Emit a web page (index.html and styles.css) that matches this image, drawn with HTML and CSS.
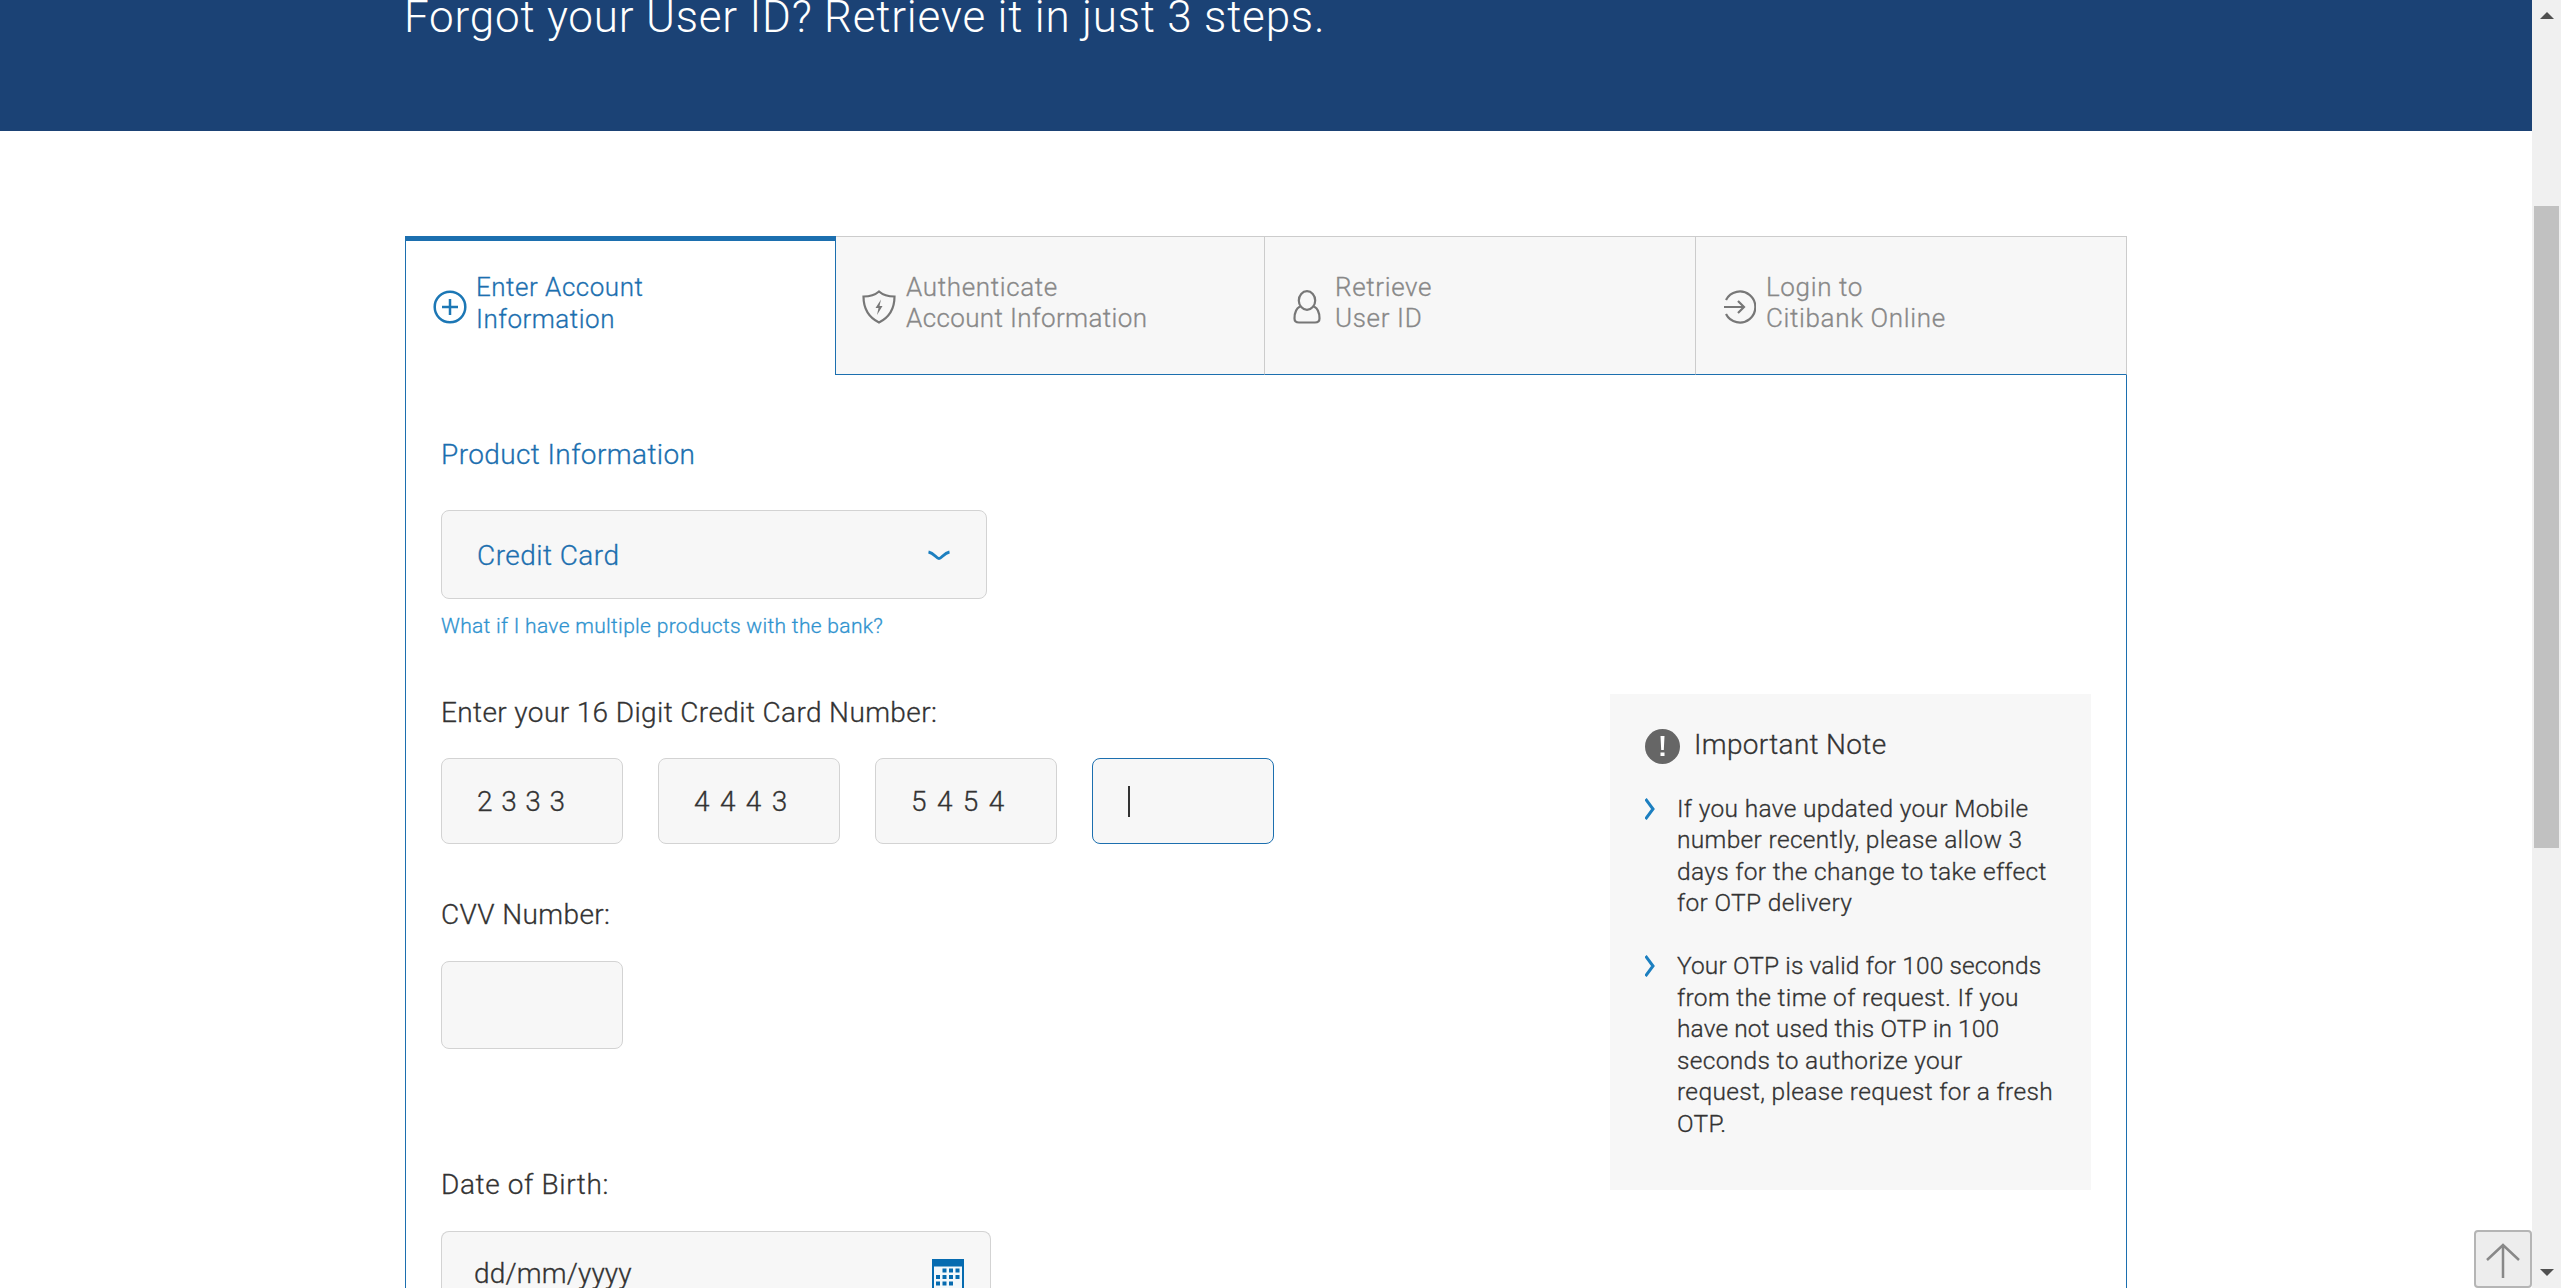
FILE: index.html
```html
<!DOCTYPE html>
<html lang="en">
<head>
<meta charset="utf-8">
<title>Forgot User ID</title>
<link rel="stylesheet" href="styles.css">
</head>
<body>
<div class="page">
  <header class="banner"><h1 class="banner-title">Forgot your User ID? Retrieve it in just 3 steps.</h1></header>
  <main class="content">
    <nav class="tabs">
      <div class="tab tab-active">
        <svg class="tab-icon" width="34" height="34" viewBox="0 0 34 34"><circle cx="17" cy="17" r="15.3"/><path d="M17 9v16M9 17h16"/></svg>
        <p class="tab-text"><span>Enter Account</span><span>Information</span></p>
      </div>
      <div class="tab">
        <svg class="tab-icon" width="34" height="34" viewBox="0 0 34 34"><path d="M17 1.500C12.500 5.500 7 6.500 1.500 6.500C1.500 18 6 27 17 32.500C28 27 32.500 18 32.500 6.500C27 6.500 21.500 5.500 17 1.500Z"/><path class="solid" d="M19 9.500L13.500 18h3l-1.500 7l5.500-9h-3z"/></svg>
        <p class="tab-text"><span>Authenticate</span><span class="line-tight">Account Information</span></p>
      </div>
      <div class="tab">
        <svg class="tab-icon" width="34" height="34" viewBox="0 0 34 34"><ellipse cx="16" cy="10.500" rx="8.200" ry="9.300"/><path d="M9 16.500C5 18.500 3.500 22 3.500 28.500C3.500 31.500 5 32.500 8 32.500H24C27 32.500 28.500 31.500 28.500 28.500C28.500 22 27 18.500 23 16.500"/></svg>
        <p class="tab-text"><span>Retrieve</span><span>User ID</span></p>
      </div>
      <div class="tab">
        <svg class="tab-icon" width="34" height="34" viewBox="0 0 34 34"><path d="M4 10A15.500 15.500 0 1 1 4 24M2 17h19.500M16 11l6 6l-6 6"/></svg>
        <p class="tab-text"><span>Login to</span><span>Citibank Online</span></p>
      </div>
    </nav>
    <section class="panel">
      <form class="form">
        <h2 class="section-title">Product Information</h2>
        <div class="select"><span>Credit Card</span>
          <svg class="chevron" width="24" height="11" viewBox="0 0 24 11"><path d="M1.500 2C7 3 9.500 8.500 12 8.500S17 3 22.500 2"/></svg>
        </div>
        <a class="help">What if I have multiple products with the bank?</a>
        <p class="label label-card">Enter your 16 Digit Credit Card Number:</p>
        <div class="digits">
          <div class="box box-first"><span>2333</span></div>
          <div class="box"><span>4443</span></div>
          <div class="box"><span>5454</span></div>
          <div class="box box-focus"><i class="caret"></i></div>
        </div>
        <p class="label label-cvv">CVV Number:</p>
        <div class="box box-cvv"></div>
        <p class="label label-dob">Date of Birth:</p>
        <div class="date"><span>dd/mm/yyyy</span>
          <svg class="calendar" width="32" height="34" viewBox="0 0 32 34"><path class="cal-frame" d="M0 0h32v34H0z"/><path class="cal-paper" d="M2 7.500h28v24H2z"/><path class="cal-days" d="M10.500 9.500h4v4h-4zM17 9.500h4v4h-4zM23.500 9.500h4v4h-4zM4 16h4v4H4zM10.500 16h4v4h-4zM17 16h4v4h-4zM23.500 16h4v4h-4zM4 22.500h4v4H4zM10.500 22.500h4v4h-4zM17 22.500h4v4h-4z"/></svg>
        </div>
      </form>
      <aside class="note">
        <h3 class="note-title"><svg width="35" height="35" viewBox="0 0 35 35"><circle cx="17.500" cy="17.500" r="17.500" fill="#666"/><path d="M15.500 7h4l-.7 14h-2.600zM15.500 23.500h4v3.500h-4z" fill="#fff"/></svg><span>Important Note</span></h3>
        <ul class="note-list">
          <li><svg class="bullet" width="10" height="24" viewBox="0 0 10 24"><path d="M.5 2L8 12L.5 22"/></svg><p><span>If you have updated your Mobile</span><span>number recently, please allow 3</span><span>days for the change to take effect</span><span>for OTP delivery</span></p></li>
          <li><svg class="bullet" width="10" height="24" viewBox="0 0 10 24"><path d="M.5 2L8 12L.5 22"/></svg><p><span class="line-tight">Your OTP is valid for 100 seconds</span><span>from the time of request. If you</span><span class="line-tight">have not used this OTP in 100</span><span>seconds to authorize your</span><span>request, please request for a fresh</span><span>OTP.</span></p></li>
        </ul>
      </aside>
    </section>
  </main>
  <div class="to-top"><svg width="58" height="58" viewBox="0 0 58 58"><path d="M29 48V15M13 30L29 15L45 30"/></svg></div>
  <div class="scrollbar"><i class="arrow-up"></i><i class="thumb"></i><i class="arrow-down"></i></div>
</div>
</body>
</html>
```
FILE: styles.css
```css
* { box-sizing: border-box; margin: 0; padding: 0; }
body { background: #fff; font-family: Roboto, "Liberation Sans", sans-serif; font-weight: 300; color: #333; overflow: hidden; }
.page { position: relative; height: 1288px; overflow: hidden; }
.banner { width: 2532px; height: 131px; background: #1b4275; padding-left: 404px; }
.banner-title { position: relative; top: -13px; font-size: 44px; line-height: 60px; font-weight: 300; letter-spacing: .8px; color: #fff; white-space: nowrap; }
.content { width: 1722px; margin: 105px 0 0 405px; }
.tabs { display: grid; grid-template-columns: 431px 429px 431px 431px; height: 139px; }
.tab { display: flex; gap: 10px; padding: 35px 0 0 26px; background: #f7f7f7; color: #888; border-top: 1px solid #ccc; border-right: 1px solid #ccc; border-bottom: 1px solid #1c6faf; font-size: 26px; line-height: 31px; letter-spacing: .65px; -webkit-text-stroke: .3px; }
.tab-active { gap: 9px; padding: 30px 0 0 27px; background: #fff; color: #1c6faf; border-top: 5px solid #1c6faf; border-left: 1px solid #1c6faf; border-right-color: #1c6faf; border-bottom: 0; line-height: 32px; letter-spacing: .52px; }
.tab-icon { margin-top: 18px; fill: none; stroke: #777; stroke-width: 2.2; flex: none; }
.tab-active .tab-icon { margin-top: 19px; stroke: #1c77b5; stroke-width: 2.5; }
.tab-icon .solid { fill: #777; stroke: none; }
.tab-text span, .note-list span { display: block; white-space: nowrap; }
.tab-text .line-tight { letter-spacing: .38px; }
.panel { display: flex; justify-content: space-between; padding: 0 35px; border-left: 1px solid #1c6faf; border-right: 1px solid #1c6faf; height: 1000px; -webkit-text-stroke: .3px; }
.form { padding-top: 63px; }
.section-title, .label { font-size: 28px; line-height: 34px; font-weight: 300; letter-spacing: .4px; white-space: nowrap; }
.section-title { color: #1c6faf; }
.select, .box, .date { display: flex; align-items: center; background: #f7f7f7; border: 1px solid #d3d3d3; border-radius: 8px; font-size: 28px; }
.select { width: 546px; height: 89px; margin-top: 38px; padding: 0 35px; color: #1c6faf; letter-spacing: .45px; justify-content: space-between; }
.select span { padding-top: 2px; }
.chevron, .bullet { fill: none; stroke: #1c7fc0; stroke-width: 3; }
.chevron { margin-top: 2px; }
.help { display: block; margin-top: 14px; font-size: 21px; line-height: 26px; letter-spacing: .31px; color: #2f93cf; }
.label-card { margin-top: 57px; letter-spacing: .38px; }
.digits { display: flex; gap: 35px; margin-top: 28px; letter-spacing: 10.4px; }
.box { width: 182px; height: 86px; padding-left: 35px; }
.box-first { letter-spacing: 8.6px; }
.box-focus { border-color: #1c6faf; }
.caret { width: 2px; height: 31px; background: #333; }
.label-cvv { margin-top: 54px; }
.box-cvv { height: 88px; margin-top: 29px; }
.label-dob { margin-top: 119px; letter-spacing: .62px; }
.date { width: 550px; height: 57px; margin-top: 29px; padding: 27px 26px 0 32px; justify-content: space-between; align-items: flex-start; line-height: 30px; letter-spacing: .15px; border-bottom: 0; border-radius: 8px 8px 0 0; }
.calendar .cal-frame, .calendar .cal-days { fill: #066bb0; }
.calendar .cal-paper { fill: #f3f8fb; }
.note { width: 481px; height: 496px; margin-top: 319px; padding: 34px 0 0 35px; background: #f7f7f7; }
.note-title { display: flex; gap: 14px; height: 35px; font-size: 28px; line-height: 34px; font-weight: 300; letter-spacing: .32px; }
.note-title svg { margin-top: 1px; }
.note-list { list-style: none; margin-top: 29.5px; font-size: 24.5px; line-height: 31.5px; letter-spacing: .34px; }
.note-list .line-tight { letter-spacing: .12px; }
.note-list li { display: flex; gap: 22px; margin-bottom: 31.5px; }
.bullet { margin-top: 4px; flex: none; }
.to-top { position: absolute; left: 2474px; top: 1230px; width: 58px; height: 58px; background: #ededed; border: 2px solid #b5b5b5; border-radius: 4px; }
.to-top svg { display: block; margin: -2px; fill: none; stroke: #888; stroke-width: 2.5; }
.scrollbar { position: absolute; left: 2532px; top: 0; width: 29px; height: 1288px; background: #f0f0f0; display: flex; flex-direction: column; align-items: center; }
.arrow-up, .arrow-down { border: 7px solid transparent; border-top-width: 0; border-bottom: 7px solid #505050; margin-top: 12px; }
.thumb { width: 25px; height: 642px; margin-top: 187px; background: #c1c1c1; }
.arrow-down { border-bottom-width: 0; border-top: 7px solid #505050; margin-top: 421px; }
```
